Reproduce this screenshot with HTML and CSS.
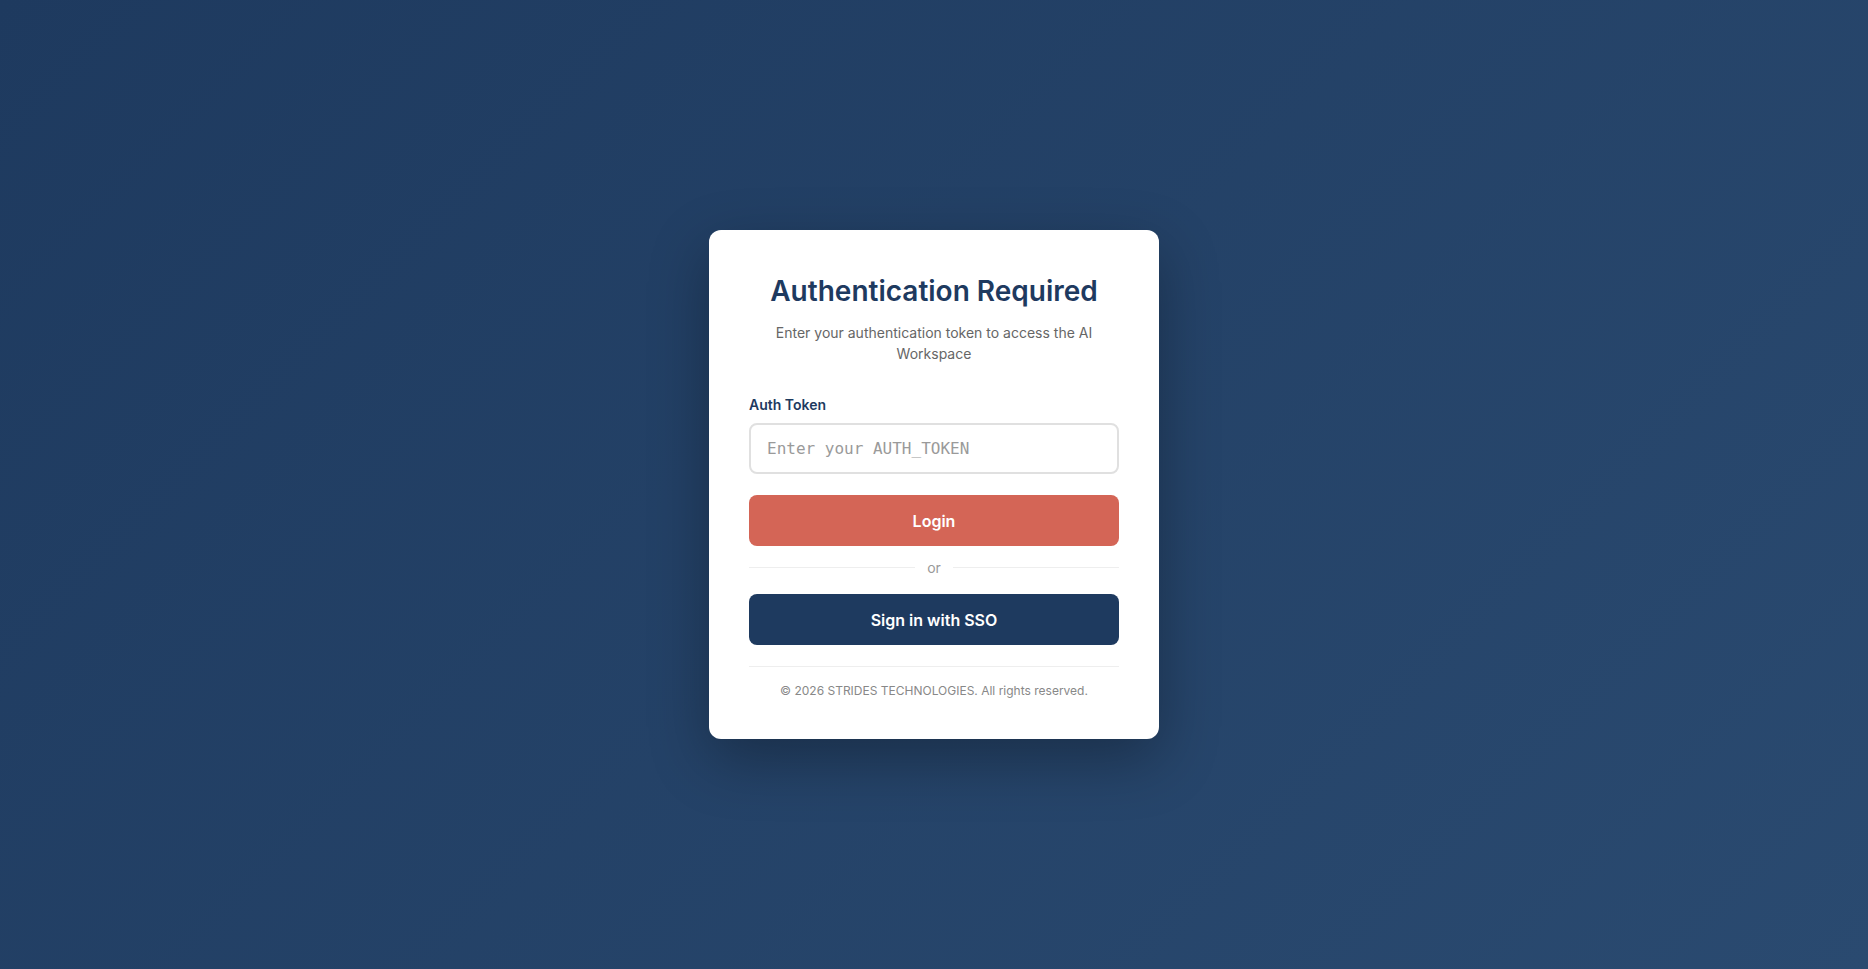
FILE: index.html
```html
<!DOCTYPE html>
<html lang="en">
<head>
<meta charset="utf-8">
<title>Authentication Required</title>
<link rel="stylesheet" href="styles.css">
</head>
<body>
<main class="page">
  <div class="card">
    <h1 class="title">Authentication Required</h1>
    <p class="subtitle">Enter your authentication token to access the AI Workspace</p>
    <form class="form" onsubmit="return false;">
      <div class="field">
        <label class="label" for="token">Auth Token</label>
        <input class="input" id="token" type="password" placeholder="Enter your AUTH_TOKEN">
      </div>
      <button class="btn btn-login" type="submit">Login</button>
      <div class="divider"><span class="divider-text">or</span></div>
      <button class="btn btn-sso" type="button">Sign in with SSO</button>
    </form>
    <footer class="footer">© 2026 STRIDES TECHNOLOGIES. All rights reserved.</footer>
  </div>
</main>
</body>
</html>
```

FILE: styles.css
```css
* { box-sizing: border-box; }

html, body {
  margin: 0;
  padding: 0;
  height: 100%;
}

body {
  font-family: Inter, "Noto Sans", "Liberation Sans", sans-serif;
  background: linear-gradient(135deg, #1e3a5f 0%, #2a4a70 100%);
  color: #333;
}

.page {
  min-height: 100vh;
  display: flex;
  align-items: center;
  justify-content: center;
}

.card {
  width: 450px;
  background: #ffffff;
  border-radius: 12px;
  padding: 40px;
  box-shadow: 0 20px 60px rgba(0, 0, 0, 0.3);
  text-align: center;
}

.title {
  margin: 0 0 10px;
  font-size: 28px;
  line-height: 42px;
  font-weight: 600;
  color: #1e3a5f;
}

.subtitle {
  margin: 0 0 30px;
  font-size: 14px;
  line-height: 21px;
  color: #666666;
}

.form {
  display: flex;
  flex-direction: column;
  text-align: left;
}

.field {
  display: flex;
  flex-direction: column;
  margin-bottom: 21px;
}

.label {
  font-size: 14px;
  line-height: 21px;
  font-weight: 600;
  color: #1e3a5f;
  margin-bottom: 8px;
}

.input {
  height: 51px;
  padding: 0 16px;
  border: 2px solid #e0e0e0;
  border-radius: 8px;
  font-family: "DejaVu Sans Mono", monospace;
  font-size: 16px;
  color: #333;
  background: #fff;
  outline: none;
}

.input::placeholder {
  color: #9a9a9a;
}

.btn {
  height: 51px;
  border: none;
  border-radius: 8px;
  font-family: Inter, "Noto Sans", "Liberation Sans", sans-serif;
  font-size: 16px;
  font-weight: 600;
  color: #ffffff;
  cursor: pointer;
}

.btn-login {
  background: #d46556;
}

.btn-sso {
  background: #1e3a5f;
}

.divider {
  display: flex;
  align-items: center;
  margin: 11px 0 16px;
  height: 21px;
}

.divider::before,
.divider::after {
  content: "";
  flex: 1;
  height: 1px;
  background: #eeeeee;
}

.divider-text {
  padding: 0 12px;
  font-size: 14px;
  line-height: 21px;
  color: #999999;
}

.footer {
  margin-top: 21px;
  padding-top: 16px;
  border-top: 1px solid #eeeeee;
  font-size: 12px;
  line-height: 16px;
  color: #888888;
}
```
